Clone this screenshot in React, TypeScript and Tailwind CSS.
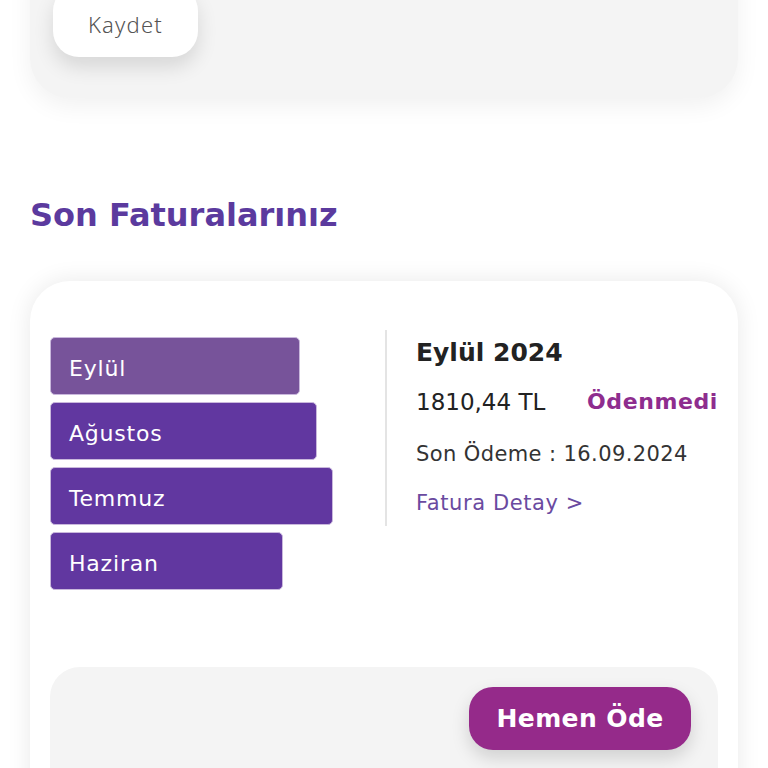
const months = [
  { name: "Eylül", w: "w-[250px]", active: true },
  { name: "Ağustos", w: "w-[267px]", active: false },
  { name: "Temmuz", w: "w-[283px]", active: false },
  { name: "Haziran", w: "w-[233px]", active: false },
]

export default function App() {
  return (
    <div className="h-[768px] overflow-hidden bg-white font-['DejaVu_Sans',sans-serif]">
      <div className="mx-[30px] -mt-[60px] rounded-b-[40px] rounded-t-[40px] bg-[#f4f4f4] pt-[45px] pb-[41px] pl-[23px] shadow-[0_8px_24px_rgba(0,0,0,0.06)]">
        <button className="flex h-[72px] w-[145px] items-center justify-center rounded-[26px] bg-white pt-[7px] font-['Noto_Sans',sans-serif] text-[22px] font-light tracking-[1.2px] text-[#555] shadow-[0_10px_20px_rgba(0,0,0,0.12)]">
          Kaydet
        </button>
      </div>

      <h2 className="mt-[96px] ml-[30px] text-[32px] font-bold leading-[42px] text-[#5b3a9e]">
        Son Faturalarınız
      </h2>

      <div className="mx-[30px] mt-[45px] rounded-t-[40px] bg-white px-[20px] pt-[49px] pb-[40px] shadow-[0_0_24px_rgba(0,0,0,0.09)]">
        <div className="flex">
          <div className="flex w-[335px] flex-col gap-[7px] pt-[7px]">
            {months.map((m) => (
              <div
                key={m.name}
                className={`flex h-[58px] items-center rounded-[5px] border border-[#c9b8dc] pt-[5px] pl-[18px] text-[22px] tracking-[0.8px] text-white ${m.w} ${m.active ? "bg-[#77539a]" : "bg-[#6137a0]"}`}
              >
                {m.name}
              </div>
            ))}
          </div>
          <div className="h-[196px] w-[2px] bg-[#e4e4e4]" />
          <div className="flex flex-col pl-[29px] pt-[6px]">
            <div className="text-[25px] font-bold leading-[34px] text-[#222]">Eylül 2024</div>
            <div className="mt-[16px] flex w-[302px] items-center justify-between">
              <span className="text-[23px] leading-[32px] text-[#222]">1810,44 TL</span>
              <span className="text-[22px] font-bold leading-[32px] tracking-[0.6px] text-[#8e2d8e]">Ödenmedi</span>
            </div>
            <div className="mt-[20px] text-[21px] leading-[32px] tracking-[0.4px] text-[#333]">Son Ödeme : 16.09.2024</div>
            <div className="mt-[17px] text-[21px] leading-[32px] tracking-[0.6px] text-[#6a4aa0]">Fatura Detay &gt;</div>
          </div>
        </div>

        <div className="mt-[77px] flex h-[140px] justify-end rounded-t-[30px] bg-[#f4f4f4] pt-[20px] pr-[27px]">
          <button className="h-[63px] w-[222px] rounded-[24px] bg-[#952a8a] text-[25px] font-bold tracking-[0.4px] text-white shadow-[0_8px_18px_rgba(0,0,0,0.15)]">
            Hemen Öde
          </button>
        </div>
      </div>
    </div>
  )
}
